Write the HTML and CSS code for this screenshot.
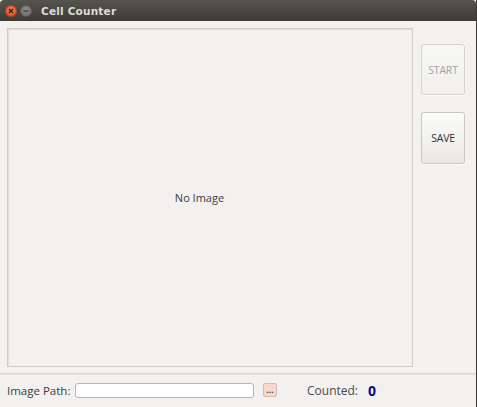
FILE: index.html
```html
<!DOCTYPE html>
<html>
<head>
<meta charset="utf-8">
<link rel="stylesheet" href="styles.css">
</head>
<body>
<div class="window">
  <div class="titlebar">
    <span class="wbtn close"><svg width="6" height="6" viewBox="0 0 6 6"><path d="M1 1L5 5M5 1L1 5" stroke="#3a1a10" stroke-width="1.3"/></svg></span>
    <span class="wbtn mini"><svg width="6" height="6" viewBox="0 0 6 6"><path d="M0.5 3H5.5" stroke="#3a3a38" stroke-width="1.3"/></svg></span>
    <span class="title">Cell Counter</span>
  </div>
  <div class="main">
    <div class="frame"><span class="noimg">No Image</span></div>
    <div class="side">
      <button class="pbtn disabled">START</button>
      <button class="pbtn">SAVE</button>
    </div>
  </div>
  <div class="bottom">
    <span class="lbl">Image Path:</span>
    <span class="input"></span>
    <span class="dots">...</span>
    <span class="counted">Counted:</span>
    <span class="count">0</span>
  </div>
</div>
</body>
</html>
```
FILE: styles.css
```css
html, body {
  margin: 0;
  padding: 0;
  background: #f2f1f0;
}
.window {
  width: 476px;
  height: 407px;
  border-right: 1px solid #3b3a37;
  background: #f2f1f0;
  display: flex;
  flex-direction: column;
  font-family: "Open Sans", "DejaVu Sans", sans-serif;
  overflow: hidden;
}
.titlebar {
  height: 21px;
  flex: none;
  background: linear-gradient(#55534d, #3c3b37);
  border-radius: 4px 4px 0 0;
  display: flex;
  align-items: center;
  padding-left: 5px;
  box-sizing: border-box;
}
.wbtn {
  width: 12px;
  height: 12px;
  border-radius: 50%;
  display: flex;
  align-items: center;
  justify-content: center;
  box-sizing: border-box;
}
.close {
  background: radial-gradient(circle at 50% 35%, #f37a4e, #df4a1c);
  border: 1px solid #b8401b;
}
.mini {
  margin-left: 3px;
  background: radial-gradient(circle at 50% 35%, #8e8c87, #6e6c67);
  border: 1px solid #5a5955;
}
.title {
  margin-left: 9px;
  color: #dfdbd2;
  font-family: "DejaVu Sans", sans-serif;
  font-weight: bold;
  font-size: 10.5px;
  letter-spacing: 0.2px;
}
.main {
  height: 352px;
  flex: none;
  display: flex;
  padding: 7px 0 0 7px;
  box-sizing: border-box;
}
.frame {
  width: 406px;
  height: 339px;
  box-sizing: border-box;
  border: 1px solid #cfcdc9;
  box-shadow: inset 1px 1px 0 #e2e0dd;
  display: flex;
  align-items: center;
  justify-content: center;
  padding-right: 21px;
}
.noimg {
  font-size: 11px;
  color: #3c3c3c;
}
.side {
  margin-left: 8px;
  padding-top: 16px;
  display: flex;
  flex-direction: column;
  gap: 17px;
}
.pbtn {
  width: 44px;
  height: 51px;
  padding: 0;
  border: 1px solid #c9c7c3;
  border-radius: 3px;
  background: linear-gradient(#fbfbfa, #f1f0ee 60%, #e8e7e4);
  font-family: "Open Sans", "DejaVu Sans", sans-serif;
  font-size: 10.5px;
  letter-spacing: -0.2px;
  color: #333333;
  box-shadow: 0 1px 0 #fdfdfd;
}
.pbtn.disabled {
  color: #a3a3a3;
  background: linear-gradient(#f7f7f6, #f1f0ee);
  border-color: #d6d4d0;
}
.pbtn + .pbtn {
  height: 52px;
}
.bottom {
  flex: 1;
  border-top: 1px solid #d9d7d3;
  box-shadow: inset 0 1px 0 #e6e4e1;
  display: flex;
  align-items: center;
  padding-left: 7px;
  padding-bottom: 1px;
  box-sizing: border-box;
}
.lbl {
  width: 68px;
  font-size: 11.5px;
  color: #3c3c3c;
  white-space: nowrap;
}
.input {
  width: 179px;
  height: 15px;
  box-sizing: border-box;
  background: #ffffff;
  border: 1px solid #b8b5af;
  border-radius: 3px;
}
.dots {
  margin-left: 9px;
  width: 14px;
  height: 14px;
  box-sizing: border-box;
  border: 1px solid #dcb9ab;
  border-radius: 2px;
  background: #f7d8cc;
  color: #444;
  font-size: 9px;
  font-weight: bold;
  line-height: 12px;
  text-align: center;
}
.counted {
  margin-left: 30px;
  width: 60px;
  font-size: 12px;
  color: #4a4a4a;
}
.count {
  margin-left: 1px;
  font-size: 14px;
  font-weight: bold;
  color: #0c0c7a;
}
```
